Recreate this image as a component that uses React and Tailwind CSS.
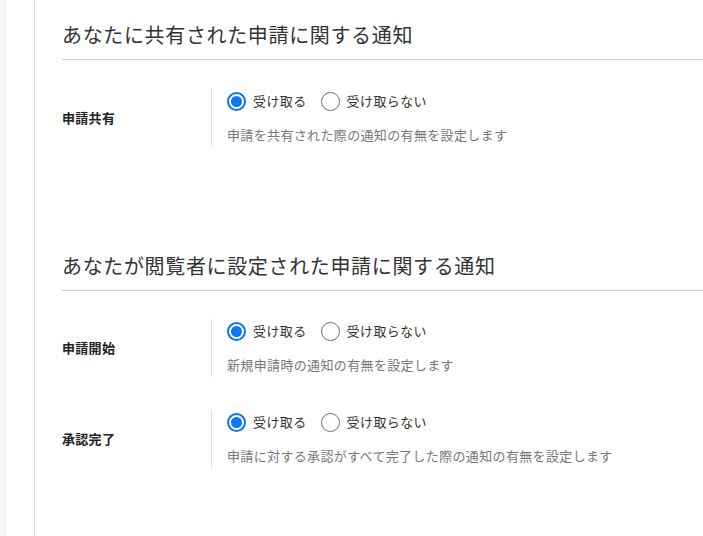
import React, { useState } from 'react';

const FONT = { fontFamily: '"Noto Sans CJK JP", "Noto Sans", sans-serif' };

function Radio({ checked, label, onClick }) {
  return (
    <button type="button" onClick={onClick} className="flex items-center gap-[7px] cursor-pointer">
      {checked ? (
        <span className="w-[19px] h-[19px] rounded-full border-2 border-[#0a78f5] flex items-center justify-center">
          <span className="w-[11px] h-[11px] rounded-full bg-[#0a78f5]" />
        </span>
      ) : (
        <span className="w-[19px] h-[19px] rounded-full border border-[#6f6f6f] bg-white" />
      )}
      <span className="text-[13px] leading-[20px] tracking-[0.4px] text-[#333]">{label}</span>
    </button>
  );
}

function SettingRow({ label, desc, className }) {
  const [on, setOn] = useState(true);
  return (
    <div className={`flex items-center ${className}`}>
      <div className="w-[149px] text-[13px] font-bold text-[#222] leading-[20px] tracking-[0.3px]">{label}</div>
      <div className="border-l border-[#dedede] pl-[15px] pt-[1px] pb-[2px]">
        <div className="h-[22px] flex items-center gap-[14px]">
          <Radio checked={on} label="受け取る" onClick={() => setOn(true)} />
          <Radio checked={!on} label="受け取らない" onClick={() => setOn(false)} />
        </div>
        <div className="mt-[13px] text-[13px] leading-[20px] tracking-[0.35px] text-[#777]">{desc}</div>
      </div>
    </div>
  );
}

function SectionHeading({ children, className }) {
  return (
    <div className={`border-b border-[#cfcfcf] pb-[9px] ${className}`}>
      <h2 className="text-[20px] leading-[30px] tracking-[0.65px] text-[#333]">{children}</h2>
    </div>
  );
}

export default function App() {
  return (
    <div className="flex h-[536px] w-[703px] overflow-hidden bg-white" style={FONT}>
      {/* sidebar edge */}
      <div className="w-[35px] shrink-0 flex border-r border-[#dcdcdc]">
        <div className="w-[7px] bg-[#f6f6f6]" />
      </div>

      <main className="flex-1 pl-[27px]">
        <SectionHeading className="mt-[20px]">あなたに共有された申請に関する通知</SectionHeading>
        <SettingRow
          className="mt-[29px]"
          label="申請共有"
          desc="申請を共有された際の通知の有無を設定します"
        />

        <SectionHeading className="mt-[104px]">あなたが閲覧者に設定された申請に関する通知</SectionHeading>
        <SettingRow
          className="mt-[28px]"
          label="申請開始"
          desc="新規申請時の通知の有無を設定します"
        />
        <SettingRow
          className="mt-[33px]"
          label="承認完了"
          desc="申請に対する承認がすべて完了した際の通知の有無を設定します"
        />
      </main>
    </div>
  );
}
